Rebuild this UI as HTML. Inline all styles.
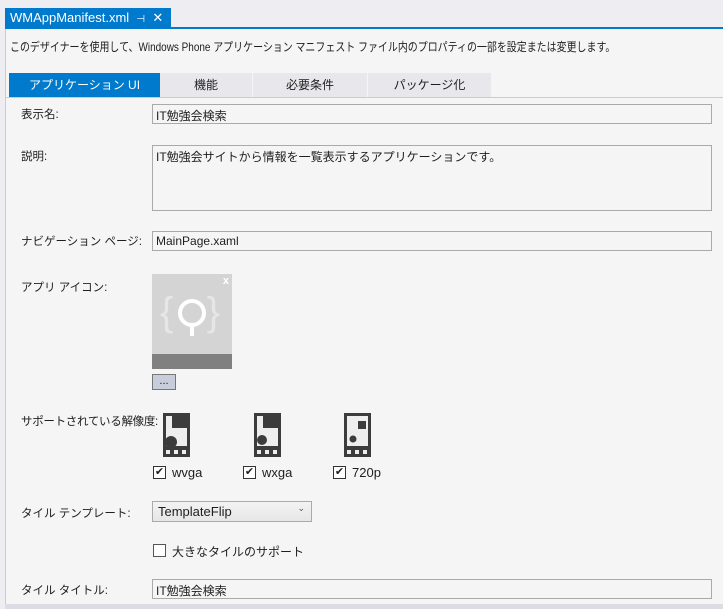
<!DOCTYPE html>
<html><head><meta charset="utf-8"><style>
*{margin:0;padding:0;box-sizing:border-box}
body{width:723px;height:609px;background:#eeeef2;font-family:"Liberation Sans","Noto Sans CJK JP",sans-serif;font-size:12px;color:#1e1e1e;position:relative;overflow:hidden}
.a{position:absolute;white-space:nowrap}
.tab{left:5px;top:8px;width:166px;height:20px;background:#007acc;color:#fff;font-size:13px;padding:2px 0 0 5px}
.line{left:5px;top:27px;width:718px;height:2px;background:#007acc}
.panel{left:5px;top:29px;width:718px;height:580px;background:#f5f5f5;border-left:1px solid #ccc}
.t{top:73px;height:24px;background:#e8e8ec;text-align:center;line-height:24px;font-size:12px}
.lbl{left:21px;font-size:11.5px}
.in{left:152px;height:20px;border:1px solid #aaa;background:#f5f5f5;padding:2px 3px;font-size:12px;width:560px}
.cb{width:13px;height:13px;border:1px solid #333;background:#fff;font-size:11px;line-height:11px;text-align:center}
</style></head><body>
<div class="a tab">WMAppManifest.xml&nbsp;&nbsp;<span style="font-size:10px">⊣</span>&nbsp;&nbsp;✕</div>
<div class="a line"></div>
<div class="a panel"></div>
<div class="a" style="left:10px;top:38px;font-size:12px;transform:scaleX(0.83);transform-origin:0 0">このデザイナーを使用して、Windows Phone アプリケーション マニフェスト ファイル内のプロパティの一部を設定または変更します。</div>
<div class="a t" style="left:9px;width:151px;background:#007acc;color:#fff">アプリケーション UI</div>
<div class="a t" style="left:160px;width:92px">機能</div>
<div class="a t" style="left:253px;width:114px">必要条件</div>
<div class="a t" style="left:368px;width:123px">パッケージ化</div>
<div class="a" style="left:5px;top:97px;width:718px;height:1px;background:#ccc"></div>
<div class="a lbl" style="top:106px">表示名:</div>
<div class="a in" style="top:104px">IT勉強会検索</div>
<div class="a lbl" style="top:148px">説明:</div>
<div class="a in" style="top:145px;height:66px">IT勉強会サイトから情報を一覧表示するアプリケーションです。</div>
<div class="a lbl" style="top:233px">ナビゲーション ページ:</div>
<div class="a in" style="top:231px">MainPage.xaml</div>
<div class="a lbl" style="top:279px">アプリ アイコン:</div>
<div class="a" style="left:152px;top:274px;width:80px;height:95px;background:#d4d4d4;overflow:hidden">
<div class="a" style="left:0;top:80px;width:80px;height:15px;background:#808080"></div>
<div class="a" style="right:3px;top:1px;color:#fff;font-size:11px;font-weight:bold">x</div>
<div class="a" style="left:8px;top:13px;color:#e6e6e6;font-size:40px;line-height:50px">{&nbsp;&nbsp;&nbsp;}</div>
<svg class="a" style="left:20px;top:20px" width="40" height="50"><circle cx="20" cy="19" r="12" fill="none" stroke="#fff" stroke-width="4"/><rect x="18" y="30" width="4" height="12" fill="#fff"/></svg>
</div>
<div class="a" style="left:152px;top:374px;width:24px;height:16px;background:#c9cddb;border:1px solid #777;font-size:11px;text-align:center;line-height:12px">...</div>
<div class="a lbl" style="top:413px;letter-spacing:-0.3px">サポートされている解像度:</div>
<svg class="a" style="left:163px;top:413px" width="30" height="44"><rect width="27" height="44" fill="#3c3c3c"/><rect x="3" y="3" width="21" height="30" fill="#eee"/><rect x="9" y="3" width="15" height="12" fill="#3c3c3c"/><circle cx="8" cy="29" r="6" fill="#3c3c3c"/><rect x="3" y="37" width="4" height="4" fill="#eee"/><rect x="11" y="37" width="4" height="4" fill="#eee"/><rect x="19" y="37" width="4" height="4" fill="#eee"/></svg>
<svg class="a" style="left:254px;top:413px" width="30" height="44"><rect width="27" height="44" fill="#3c3c3c"/><rect x="3" y="3" width="21" height="30" fill="#eee"/><rect x="9" y="3" width="15" height="12" fill="#3c3c3c"/><circle cx="8" cy="27" r="5" fill="#3c3c3c"/><rect x="3" y="37" width="4" height="4" fill="#eee"/><rect x="11" y="37" width="4" height="4" fill="#eee"/><rect x="19" y="37" width="4" height="4" fill="#eee"/></svg>
<svg class="a" style="left:344px;top:413px" width="30" height="44"><rect width="27" height="44" fill="#3c3c3c"/><rect x="3" y="3" width="21" height="30" fill="#eee"/><rect x="14" y="8" width="8" height="8" fill="#3c3c3c"/><circle cx="9" cy="26" r="3.5" fill="#3c3c3c"/><rect x="3" y="37" width="4" height="4" fill="#eee"/><rect x="11" y="37" width="4" height="4" fill="#eee"/><rect x="19" y="37" width="4" height="4" fill="#eee"/></svg>
<div class="a cb" style="left:153px;top:466px">✔</div><div class="a" style="left:172px;top:465px;font-size:13px">wvga</div>
<div class="a cb" style="left:243px;top:466px">✔</div><div class="a" style="left:262px;top:465px;font-size:13px">wxga</div>
<div class="a cb" style="left:333px;top:466px">✔</div><div class="a" style="left:352px;top:465px;font-size:13px">720p</div>
<div class="a lbl" style="top:505px">タイル テンプレート:</div>
<div class="a" style="left:152px;top:501px;width:160px;height:21px;border:1px solid #aaa;background:linear-gradient(#f3f3f3,#e6e6e6);padding:2px 5px;font-size:13px">TemplateFlip<span style="position:absolute;right:6px;top:1px;font-size:9px;color:#555">⌄</span></div>
<div class="a cb" style="left:153px;top:544px;border-color:#555"></div>
<div class="a" style="left:172px;top:543px">大きなタイルのサポート</div>
<div class="a lbl" style="top:582px">タイル タイトル:</div>
<div class="a in" style="top:579px">IT勉強会検索</div>
<div class="a" style="left:5px;top:604px;width:718px;height:5px;background:#dcdce4"></div>
</body></html>
